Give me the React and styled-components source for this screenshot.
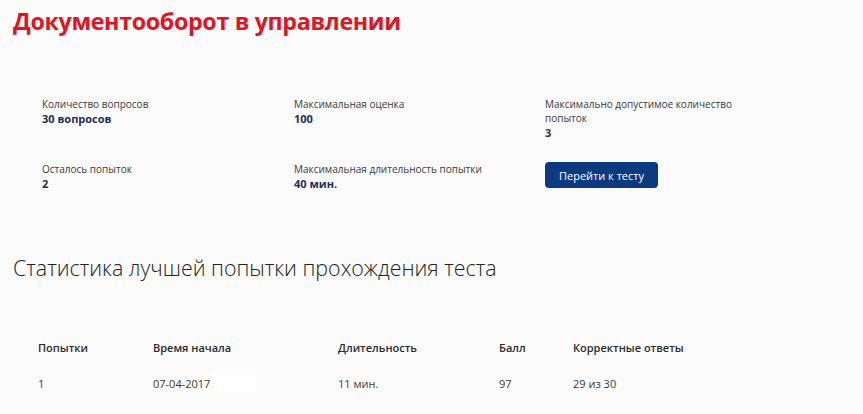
import React from 'react';
import styled, {createGlobalStyle} from 'styled-components';

const GlobalStyle = createGlobalStyle`
  body {
    margin: 0;
    background: #fbfbfb;
    font-family: 'Open Sans', 'Noto Sans', sans-serif;
    color: #333;
  }
`;

const Page = styled.div`
  padding: 4px 13px 0 13px;
`;

const Title = styled.h1`
  margin: 0;
  color: #e3131f;
  font-size: 23.2px;
  font-weight: 700;
  line-height: 34px;
  letter-spacing: -0.3px;
`;

const InfoGrid = styled.div`
  display: grid;
  grid-template-columns: 252px 251px 220px;
  row-gap: 22px;
  padding: 59px 0 0 29px;
`;

const Item = styled.div`
  display: flex;
  flex-direction: column;
`;

const Label = styled.div`
  font-size: 10px;
  line-height: 14px;
  color: #3a3a3a;
  max-width: ${p => (p.$narrow ? '200px' : 'none')};
`;

const Value = styled.div`
  font-size: 11px;
  font-weight: 700;
  line-height: 15px;
  color: #1c2d5a;
`;

const Button = styled.button`
  align-self: flex-start;
  height: 26px;
  padding: 0 14px;
  border: none;
  border-radius: 4px;
  background: #0b3a80;
  color: #fff;
  font-family: inherit;
  font-size: 11px;
  cursor: pointer;
`;

const SectionTitle = styled.h2`
  margin: 64px 0 0 0;
  font-size: 21.4px;
  font-weight: 300;
  color: #222;
  line-height: 26px;
`;

const Table = styled.div`
  padding: 53px 0 0 25px;
`;

const Row = styled.div`
  display: grid;
  grid-template-columns: 115px 185px 161px 74px 200px;
  align-items: center;
  height: 26px;
  margin-bottom: ${p => (p.$head ? '10px' : '0')};
  font-size: 11px;
  font-weight: ${p => (p.$head ? 600 : 400)};
  color: ${p => (p.$head ? '#2a2a2a' : '#3a3a3a')};
`;

const Cell = styled.div`
  display: flex;
  align-items: center;
`;

const Blank = styled.span`
  display: inline-block;
  width: 42px;
  height: 18px;
  margin-left: 4px;
  background: #fff;
`;

const info = [
  {label: 'Количество вопросов', value: '30 вопросов'},
  {label: 'Максимальная оценка', value: '100'},
  {label: 'Максимально допустимое количество попыток', value: '3', narrow: true},
  {label: 'Осталось попыток', value: '2'},
  {label: 'Максимальная длительность попытки', value: '40 мин.'},
];

export default function App() {
  return (
    <Page>
      <GlobalStyle />
      <Title>Документооборот в управлении</Title>

      <InfoGrid>
        {info.map(i => (
          <Item key={i.label}>
            <Label $narrow={i.narrow}>{i.label}</Label>
            <Value>{i.value}</Value>
          </Item>
        ))}
        <Item>
          <Button>Перейти к тесту</Button>
        </Item>
      </InfoGrid>

      <SectionTitle>Статистика лучшей попытки прохождения теста</SectionTitle>

      <Table>
        <Row $head>
          <Cell>Попытки</Cell>
          <Cell>Время начала</Cell>
          <Cell>Длительность</Cell>
          <Cell>Балл</Cell>
          <Cell>Корректные ответы</Cell>
        </Row>
        <Row>
          <Cell>1</Cell>
          <Cell>07-04-2017<Blank /></Cell>
          <Cell>11 мин.</Cell>
          <Cell>97</Cell>
          <Cell>29 из 30</Cell>
        </Row>
      </Table>
    </Page>
  );
}
